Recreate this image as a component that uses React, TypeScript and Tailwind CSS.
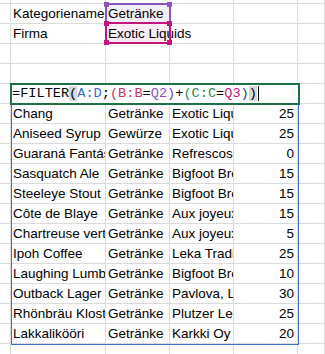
import React from 'react';

type Row = [string, string, string, number];

const rows: Row[] = [
  ['Chang', 'Getränke', 'Exotic Liquids', 25],
  ['Aniseed Syrup', 'Gewürze', 'Exotic Liquids', 25],
  ['Guaraná Fantástica', 'Getränke', 'Refrescos Americanas LTDA', 0],
  ['Sasquatch Ale', 'Getränke', 'Bigfoot Breweries', 15],
  ['Steeleye Stout', 'Getränke', 'Bigfoot Breweries', 15],
  ['Côte de Blaye', 'Getränke', 'Aux joyeux ecclésiastiques', 15],
  ['Chartreuse verte', 'Getränke', 'Aux joyeux ecclésiastiques', 5],
  ['Ipoh Coffee', 'Getränke', 'Leka Trading', 25],
  ['Laughing Lumberjack Lager', 'Getränke', 'Bigfoot Breweries', 10],
  ['Outback Lager', 'Getränke', 'Pavlova, Ltd.', 30],
  ['Rhönbräu Klosterbier', 'Getränke', 'Plutzer Lebensmittelgroßmärkte AG', 25],
  ['Lakkalikööri', 'Getränke', 'Karkki Oy', 20],
];

const cell = 'shrink-0 h-full border-r border-b border-[#dadada] whitespace-nowrap overflow-hidden leading-[19px] px-[2px]';
const free = 'shrink-0 h-full border-r border-b border-[#dadada] whitespace-nowrap leading-[19px] px-[2px]';

function Blank({ h }: { h: string }) {
  return (
    <div className={`flex ${h}`}>
      <div className={`${cell} w-[11px]`} />
      <div className={`${cell} w-[95px]`} />
      <div className={`${cell} w-[64px]`} />
      <div className={`${cell} w-[64px]`} />
      <div className={`${cell} w-[64px]`} />
      <div className={`${cell} flex-1`} />
    </div>
  );
}

function Handle({ c, pos }: { c: string; pos: string }) {
  return <span className={`absolute w-[5px] h-[5px] ${c} ${pos}`} />;
}

export default function App() {
  return (
    <div className="relative w-[325px] h-[354px] overflow-hidden bg-white text-[13.5px] text-black" style={{ fontFamily: '"Liberation Sans", Arial, sans-serif' }}>
      <Blank h="h-[4px]" />
      <div className="flex h-[20px]">
        <div className={`${cell} w-[11px]`} />
        <div className={`${cell} w-[95px]`}>Kategoriename</div>
        <div className={`${cell} w-[64px] bg-[#f4eef9]`}>Getränke</div>
        <div className={`${cell} w-[64px]`} />
        <div className={`${cell} w-[64px]`} />
        <div className={`${cell} flex-1`} />
      </div>
      <div className="flex h-[20px]">
        <div className={`${cell} w-[11px]`} />
        <div className={`${cell} w-[95px]`}>Firma</div>
        <div className={`${free} w-[64px] bg-[#f9ecf4] border-r-transparent relative z-10`}>Exotic Liquids</div>
        <div className={`${cell} w-[64px]`} />
        <div className={`${cell} w-[64px]`} />
        <div className={`${cell} flex-1`} />
      </div>
      <Blank h="h-[20px]" />
      <Blank h="h-[20px]" />
      <div className="flex h-[20px]">
        <div className={`${cell} w-[11px]`} />
        <div className="shrink-0 h-full w-[287px] border-b border-[#dadada] whitespace-nowrap leading-[19px] pl-[1px] text-[13.6px]" style={{ fontFamily: '"Liberation Mono", "Courier New", monospace' }}>
          <span>=FILTER</span>
          <span className="bg-[#d8d8d8]">(</span>
          <span className="text-[#2f6fd0]">A:D</span>
          <span>;</span>
          <span className="text-[#c0366a]">(</span>
          <span className="text-[#c8325c]">B:B</span>
          <span>=</span>
          <span className="text-[#8d4fcc]">Q2</span>
          <span className="text-[#7a3fb8]">)</span>
          <span>+</span>
          <span className="text-[#1e8c4a]">(</span>
          <span className="text-[#1e8c4a]">C:C</span>
          <span>=</span>
          <span className="text-[#c0187f]">Q3</span>
          <span className="text-[#1f3f8f]">)</span>
          <span className="bg-[#d8d8d8]">)</span>
          <span className="inline-block w-[1px] h-[15px] bg-black align-middle ml-[1px]" />
        </div>
        <div className={`${cell} flex-1`} />
      </div>
      {rows.map((r, i) => (
        <div key={i} className="flex h-[20px]">
          <div className={`${cell} w-[11px]`} />
          <div className={`${cell} w-[95px]`}>{r[0]}</div>
          <div className={`${cell} w-[64px]`}>{r[1]}</div>
          <div className={`${cell} w-[64px]`}>{r[2]}</div>
          <div className={`${cell} w-[64px] text-right pr-[3px]`}>{r[3]}</div>
          <div className={`${cell} flex-1`} />
        </div>
      ))}
      <Blank h="h-[20px]" />

      {/* Q2 reference frame */}
      <div className="absolute left-[105px] top-[3px] w-[66px] h-[21px] border-2 border-[#8a55c2] z-20 pointer-events-none">
        <Handle c="bg-[#8a55c2]" pos="-left-[3px] -top-[3px]" />
        <Handle c="bg-[#8a55c2]" pos="-right-[3px] -top-[3px]" />
      </div>
      {/* Q3 reference frame */}
      <div className="absolute left-[105px] top-[22px] w-[66px] h-[22px] border-2 border-[#c4157e] z-30 pointer-events-none">
        <Handle c="bg-[#c4157e]" pos="-left-[3px] -top-[3px]" />
        <Handle c="bg-[#c4157e]" pos="-right-[3px] -top-[3px]" />
        <Handle c="bg-[#c4157e]" pos="-left-[3px] -bottom-[3px]" />
        <Handle c="bg-[#c4157e]" pos="-right-[3px] -bottom-[3px]" />
      </div>
      {/* active cell */}
      <div className="absolute left-[10px] top-[83px] w-[290px] h-[22px] border-2 border-[#1e7145] z-20 pointer-events-none" />
      {/* spill range */}
      <div className="absolute left-[11px] top-[104px] w-[288px] h-[241px] border border-[#3f6fc6] z-10 pointer-events-none" />
    </div>
  );
}
